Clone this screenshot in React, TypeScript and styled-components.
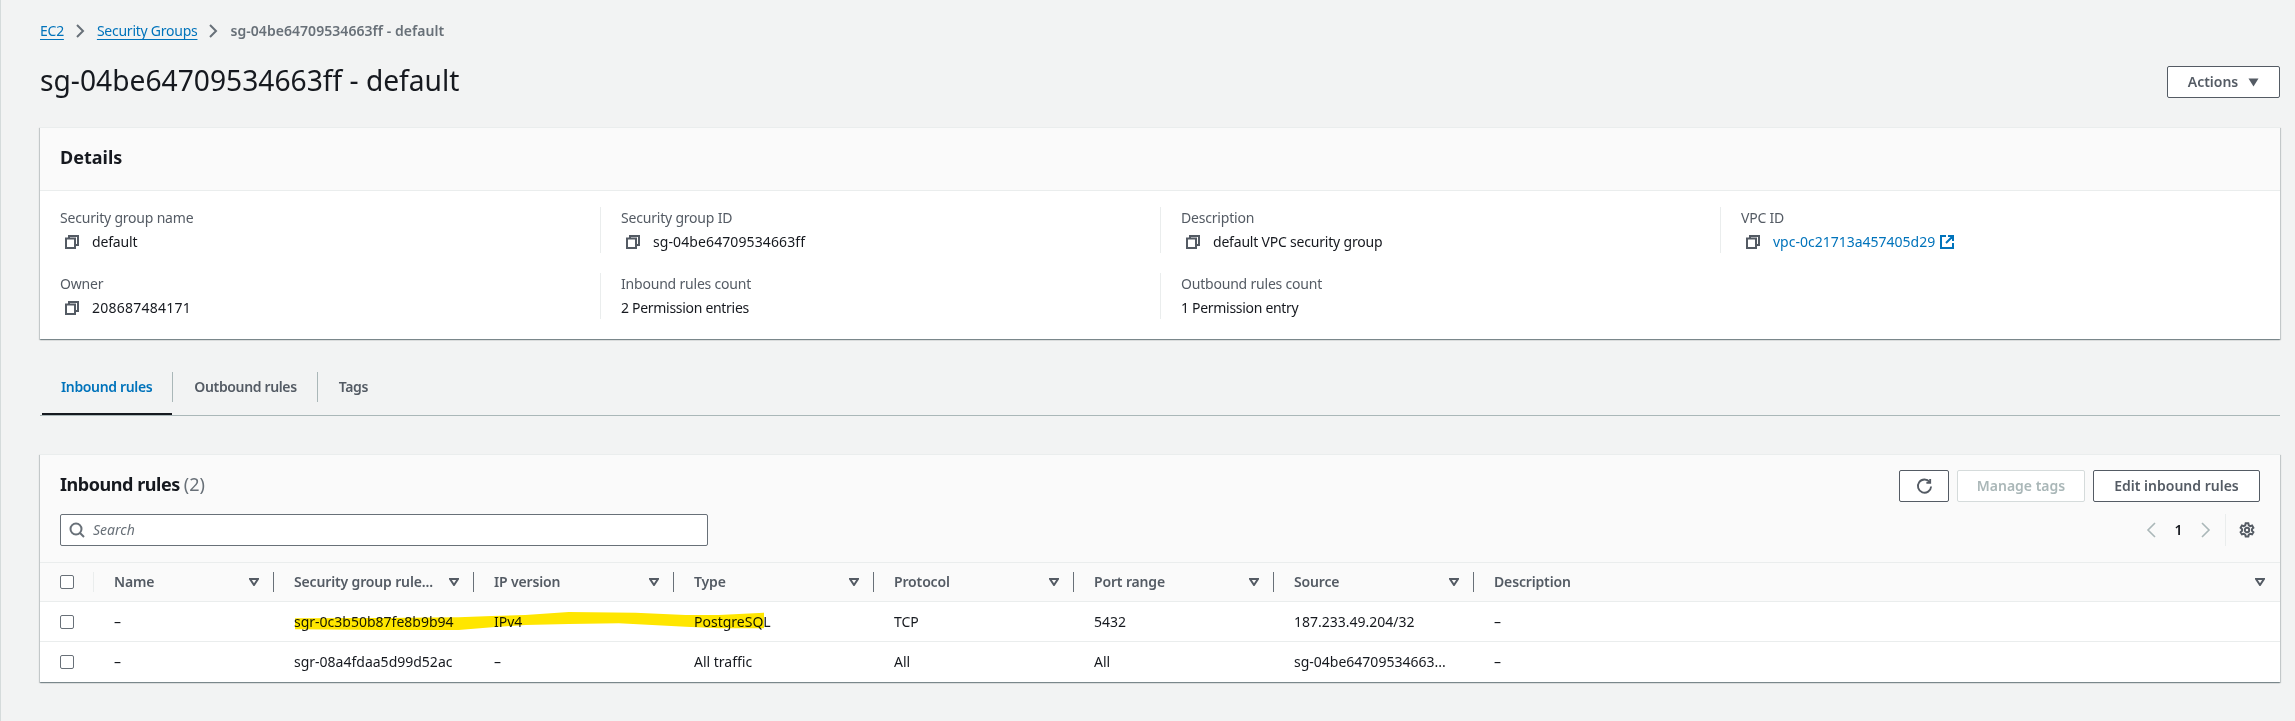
import React from "react";
import styled, { createGlobalStyle } from "styled-components";

const Global = createGlobalStyle`
  html, body { margin: 0; padding: 0; background: #f2f3f3; }
  body { font-family: "Noto Sans", "Open Sans", "Liberation Sans", sans-serif; font-size: 14px; line-height: 22px; color: #16191f; }
  * { box-sizing: border-box; }
`;

const Page = styled.div`
  width: 2295px;
  height: 721px;
  overflow: hidden;
  border-left: 1px solid #d5dbdb;
  padding: 21px 15px 0 39px;
`;

const Crumbs = styled.nav`
  display: flex;
  align-items: center;
  height: 20px;
  line-height: 20px;
`;
const CrumbLink = styled.a`
  color: #0073bb;
  letter-spacing: -0.25px;
  text-decoration: underline;
  text-underline-offset: 3px;
  text-decoration-thickness: 1px;
`;
const CrumbCurrent = styled.span`
  color: #687078;
  font-weight: 600;
  letter-spacing: 0.05px;
`;
const CrumbChevron = styled.svg`
  width: 10px;
  height: 14px;
  margin: 0 12px 0 11px;
  fill: none;
  stroke: #687078;
  stroke-width: 2;
`;

const HeadRow = styled.header`
  display: flex;
  align-items: center;
  justify-content: space-between;
  height: 32px;
  margin-top: 25px;
`;
const Title = styled.h1`
  margin: 0 0 5px;
  font-size: 28.2px;
  line-height: 36px;
  font-weight: 400;
  color: #16191f;
`;

const Button = styled.button<{ $disabled?: boolean; $w?: number }>`
  display: flex;
  align-items: center;
  justify-content: center;
  height: 32px;
  width: ${(p) => (p.$w ? `${p.$w}px` : "auto")};
  padding: 0;
  background: #fff;
  border: 1px solid ${(p) => (p.$disabled ? "#d5dbdb" : "#545b64")};
  border-radius: 2px;
  font: 600 14px/20px "Noto Sans", "Open Sans", sans-serif;
  color: ${(p) => (p.$disabled ? "#aab7b8" : "#545b64")};
`;
const Caret = styled.svg`
  width: 11px;
  height: 9px;
  margin-left: 10px;
  fill: #545b64;
`;

const Panel = styled.section`
  background: #fff;
  box-shadow: 0 1px 1px 0 rgba(0, 28, 36, 0.3), 1px 1px 1px 0 rgba(0, 28, 36, 0.15), -1px 1px 1px 0 rgba(0, 28, 36, 0.15);
  border-top: 1px solid #eaeded;
`;
const DetailsPanel = styled(Panel)`
  margin-top: 29px;
  height: 212px;
`;
const PanelHead = styled.div`
  display: flex;
  align-items: center;
  height: 63px;
  padding-left: 20px;
  background: #fafafa;
  border-bottom: 1px solid #eaeded;
`;
const PanelTitle = styled.h2<{ $ls?: string }>`
  margin: 0 0 4px;
  font-size: 18px;
  line-height: 22px;
  font-weight: 700;
  color: #16191f;
  letter-spacing: ${(p) => p.$ls ?? "0"};
`;
const Count = styled.span`
  font-weight: 400;
  color: #687078;
  margin-left: 4px;
  letter-spacing: 0;
`;
const FieldGrid = styled.div`
  display: grid;
  grid-template-columns: repeat(4, 560px);
  row-gap: 20px;
  padding-top: 16px;
`;
const Field = styled.div<{ $first?: boolean }>`
  height: 46px;
  padding-left: 20px;
  border-left: ${(p) => (p.$first ? "none" : "1px solid #eaeded")};
`;
const FieldLabel = styled.div`
  color: #545b64;
  margin-bottom: 2px;
  letter-spacing: -0.2px;
`;
const FieldValue = styled.div<{ $ls?: string }>`
  display: flex;
  align-items: center;
  letter-spacing: ${(p) => p.$ls ?? "0"};
`;
const CopyIcon = styled.svg`
  width: 14px;
  height: 14px;
  margin: 0 13px 0 5px;
  fill: none;
  stroke: #545b64;
  stroke-width: 2;
`;
const ValueLink = styled.a`
  color: #0073bb;
`;
const ExternalIcon = styled.svg`
  width: 14px;
  height: 14px;
  margin-left: 5px;
  fill: none;
  stroke: #0073bb;
  stroke-width: 2;
`;

const Tabs = styled.div`
  display: flex;
  height: 57px;
  margin-top: 20px;
  padding: 0 0 0 2px;
  border-bottom: 1px solid #aab7b8;
`;
const Tab = styled.div<{ $active?: boolean }>`
  display: flex;
  align-items: center;
  height: 56px;
  padding: 1px 20px 0 ${(p) => (p.$active ? "19px" : "21px")};
  font-weight: 600;
  letter-spacing: -0.35px;
  color: ${(p) => (p.$active ? "#0073bb" : "#545b64")};
  border-bottom: 2px solid ${(p) => (p.$active ? "#16191f" : "transparent")};
`;
const TabDivider = styled.span`
  width: 1px;
  height: 30px;
  margin-top: 13px;
  background: #aab7b8;
`;

const TablePanel = styled(Panel)`
  position: relative;
  margin-top: 38px;
  height: 228px;
`;
const Toolbar = styled.div`
  height: 107px;
  padding: 15px 20px 0;
  background: #fafafa;
`;
const ToolRow = styled.div`
  display: flex;
  align-items: center;
  justify-content: space-between;
  height: 32px;
`;
const ToolButtons = styled.div`
  display: flex;
  gap: 8px;
`;
const SearchRow = styled(ToolRow)`
  margin-top: 12px;
`;
const SearchBox = styled.div`
  display: flex;
  align-items: center;
  width: 648px;
  height: 32px;
  padding-left: 8px;
  background: #fff;
  border: 1px solid #687078;
  border-radius: 2px;
`;
const Placeholder = styled.span`
  margin-left: 8px;
  font-style: italic;
  font-size: 14px;
  color: #687078;
`;
const Pager = styled.div`
  display: flex;
  align-items: center;
`;
const PagerChevron = styled.svg`
  width: 10px;
  height: 16px;
  fill: none;
  stroke: #aab7b8;
  stroke-width: 1.6;
`;
const PageNumber = styled.span`
  width: 45px;
  text-align: center;
  font-weight: 600;
  color: #16191f;
`;
const PagerDivider = styled.span`
  width: 1px;
  height: 32px;
  margin: 0 13px 0 14px;
  background: #eaeded;
`;
const GearIcon = styled.svg`
  width: 16px;
  height: 16px;
  margin-right: 5px;
  fill: none;
  stroke: #545b64;
  stroke-width: 2.2;
`;

const Row = styled.div<{ $h: number; $head?: boolean }>`
  display: grid;
  grid-template-columns: 54px 180px repeat(6, 200px) 1fr;
  align-items: center;
  height: ${(p) => p.$h}px;
  background: ${(p) => (p.$head ? "#fafafa" : "#fff")};
  border-top: 1px solid #eaeded;
`;
const CheckCell = styled.div`
  display: flex;
  align-items: center;
  justify-content: space-between;
  padding-left: 20px;
`;
const Checkbox = styled.span`
  display: block;
  width: 14px;
  height: 14px;
  background: #fff;
  border: 1px solid #687078;
  border-radius: 2px;
`;
const SoftDivider = styled.span`
  width: 1px;
  height: 20px;
  background: #eaeded;
`;
const HeadCell = styled.div`
  display: flex;
  align-items: center;
  padding-left: 20px;
`;
const HeadLabel = styled.span`
  flex: 1;
  font-weight: 600;
  color: #545b64;
  white-space: nowrap;
  letter-spacing: -0.15px;
`;
const FilterIcon = styled.svg`
  width: 10px;
  height: 8px;
  fill: none;
  stroke: #545b64;
  stroke-width: 2;
`;
const ColDivider = styled.span`
  width: 1px;
  height: 20px;
  margin-left: 14px;
  background: #687078;
`;
const LastHeadCell = styled(HeadCell)`
  padding-right: 15px;
`;
const Cell = styled.div`
  padding-left: 20px;
  color: #16191f;
  white-space: nowrap;
`;
const Highlight = styled.svg`
  position: absolute;
  left: 255px;
  top: 157px;
  width: 469px;
  height: 18px;
  mix-blend-mode: multiply;
  fill: #ffe600;
`;

const Chevron = () => (
  <CrumbChevron viewBox="0 0 10 14"><path d="M2 1l6 6-6 6" /></CrumbChevron>
);
const Copy = () => (
  <CopyIcon viewBox="0 0 14 14"><path d="M4 3V1h9v9h-3" /><rect x="1" y="3.5" width="9" height="9.5" /></CopyIcon>
);
const Filter = () => (
  <FilterIcon viewBox="0 0 10 8"><path d="M1 1h8L5 7z" /></FilterIcon>
);

const columns = ["Name", "Security group rule...", "IP version", "Type", "Protocol", "Port range", "Source"];
const rows = [
  ["–", "sgr-0c3b50b87fe8b9b94", "IPv4", "PostgreSQL", "TCP", "5432", "187.233.49.204/32", "–"],
  ["–", "sgr-08a4fdaa5d99d52ac", "–", "All traffic", "All", "All", "sg-04be64709534663...", "–"],
];

export default function App() {
  return (
    <Page>
      <Global />
      <Crumbs>
        <CrumbLink>EC2</CrumbLink>
        <Chevron />
        <CrumbLink>Security Groups</CrumbLink>
        <Chevron />
        <CrumbCurrent>sg-04be64709534663ff - default</CrumbCurrent>
      </Crumbs>
      <HeadRow>
        <Title>sg-04be64709534663ff - default</Title>
        <Button $w={113}>
          Actions
          <Caret viewBox="0 0 11 9"><path d="M0.5 0.5h10L5.5 8.5z" /></Caret>
        </Button>
      </HeadRow>

      <DetailsPanel>
        <PanelHead><PanelTitle>Details</PanelTitle></PanelHead>
        <FieldGrid>
          <Field $first>
            <FieldLabel>Security group name</FieldLabel>
            <FieldValue $ls="-0.15px"><Copy />default</FieldValue>
          </Field>
          <Field>
            <FieldLabel>Security group ID</FieldLabel>
            <FieldValue $ls="0.1px"><Copy />sg-04be64709534663ff</FieldValue>
          </Field>
          <Field>
            <FieldLabel>Description</FieldLabel>
            <FieldValue $ls="-0.2px"><Copy />default VPC security group</FieldValue>
          </Field>
          <Field>
            <FieldLabel>VPC ID</FieldLabel>
            <FieldValue>
              <Copy />
              <ValueLink>vpc-0c21713a457405d29</ValueLink>
              <ExternalIcon viewBox="0 0 14 14"><path d="M6 1H1v12h12V8M8 1h5v5M13 1L6 8" /></ExternalIcon>
            </FieldValue>
          </Field>
          <Field $first>
            <FieldLabel>Owner</FieldLabel>
            <FieldValue $ls="0.25px"><Copy />208687484171</FieldValue>
          </Field>
          <Field>
            <FieldLabel>Inbound rules count</FieldLabel>
            <FieldValue $ls="-0.3px">2 Permission entries</FieldValue>
          </Field>
          <Field>
            <FieldLabel>Outbound rules count</FieldLabel>
            <FieldValue $ls="-0.3px">1 Permission entry</FieldValue>
          </Field>
        </FieldGrid>
      </DetailsPanel>

      <Tabs>
        <Tab $active>Inbound rules</Tab>
        <TabDivider />
        <Tab>Outbound rules</Tab>
        <TabDivider />
        <Tab>Tags</Tab>
      </Tabs>

      <TablePanel>
        <Toolbar>
          <ToolRow>
            <PanelTitle $ls="-0.45px">Inbound rules<Count>(2)</Count></PanelTitle>
            <ToolButtons>
              <Button $w={50} aria-label="Refresh">
                <svg width="17" height="17" viewBox="0 0 18 18" fill="none" stroke="#545b64" strokeWidth="2">
                  <path d="M14.5 4.2A7 7 0 1 0 16 9" />
                  <path d="M15 1v4h-4" />
                </svg>
              </Button>
              <Button $w={128} $disabled>Manage tags</Button>
              <Button $w={167}>Edit inbound rules</Button>
            </ToolButtons>
          </ToolRow>
          <SearchRow>
            <SearchBox>
              <svg width="16" height="16" viewBox="0 0 16 16" fill="none" stroke="#687078" strokeWidth="2">
                <circle cx="7" cy="7" r="5.5" />
                <path d="M11 11l4 4" />
              </svg>
              <Placeholder>Search</Placeholder>
            </SearchBox>
            <Pager>
              <PagerChevron viewBox="0 0 10 16"><path d="M9 1L2 8l7 7" /></PagerChevron>
              <PageNumber>1</PageNumber>
              <PagerChevron viewBox="0 0 10 16"><path d="M1 1l7 7-7 7" /></PagerChevron>
              <PagerDivider />
              <GearIcon viewBox="0 0 18 18">
                <path d="M7.5 1.5h3l.5 2.2 1.6.9 2.1-.7 1.5 2.6-1.6 1.5v1.9l1.6 1.5-1.5 2.6-2.1-.7-1.6.9-.5 2.2h-3l-.5-2.2-1.6-.9-2.1.7-1.5-2.6 1.6-1.5V8L1.8 6.5l1.5-2.6 2.1.7 1.6-.9z" />
                <circle cx="9" cy="9" r="2.5" />
              </GearIcon>
            </Pager>
          </SearchRow>
        </Toolbar>
        <Row $h={39} $head>
          <CheckCell><Checkbox /><SoftDivider /></CheckCell>
          {columns.map((c) => (
            <HeadCell key={c}>
              <HeadLabel>{c}</HeadLabel>
              <Filter />
              <ColDivider />
            </HeadCell>
          ))}
          <LastHeadCell>
            <HeadLabel>Description</HeadLabel>
            <Filter />
          </LastHeadCell>
        </Row>
        {rows.map((r, n) => (
          <Row key={r[1]} $h={n === 0 ? 40 : 41}>
            <CheckCell><Checkbox /></CheckCell>
            {r.map((v, i) => (
              <Cell key={i}>{v}</Cell>
            ))}
          </Row>
        ))}
        <Highlight viewBox="30 36 1405 54" preserveAspectRatio="none">
          <path d="M30 55 L300 54 L520 52 L620 48 L720 45 L850 36 L1050 38 L1200 45 L1300 45 L1435 38 L1435 85 L1300 85 L1200 80 L1000 70 L850 72 L720 75 L620 82 L520 90 L300 90 L30 88 Z" />
        </Highlight>
      </TablePanel>
    </Page>
  );
}
